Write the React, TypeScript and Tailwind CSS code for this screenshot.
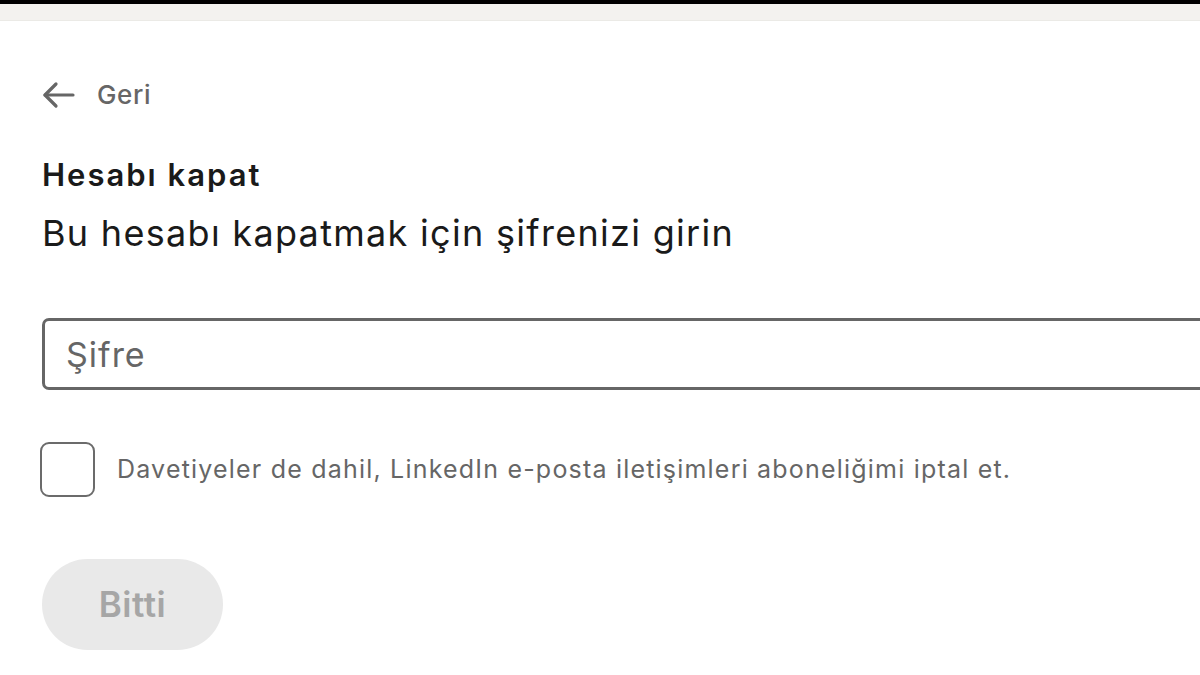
import React from "react";

export default function App() {
  return (
    <div className="w-[1200px] h-[675px] overflow-hidden bg-white relative" style={{ fontFamily: "Inter, 'Liberation Sans', sans-serif" }}>
      <div className="h-[4px] bg-black" />
      <div className="h-[17px] bg-[#f3f2ef] border-b border-[#ebeae6]" />
      <div className="pl-[42px] pt-[59px]">
        <div className="flex items-center gap-[22px] text-[#666666] h-[30px]">
          <svg width="33" height="28" viewBox="0 0 33 28" fill="none" stroke="#666666" strokeWidth="3.2" strokeLinecap="round" strokeLinejoin="round">
            <path d="M31 14H3" />
            <path d="M14 3L3 14l11 11" />
          </svg>
          <span className="text-[26px] leading-[30px] font-medium tracking-[0.6px]">Geri</span>
        </div>
        <h1 className="mt-[47px] text-[31px] leading-[36px] font-semibold text-[#1a1a1a] tracking-[2px]">Hesabı kapat</h1>
        <p className="mt-[18px] text-[36px] leading-[44px] text-[#1a1a1a] tracking-[1.3px]">Bu hesabı kapatmak için şifrenizi girin</p>
        <div className="mt-[63px] w-[1200px] h-[72px] border-[3px] border-[#666666] rounded-[7px] flex items-center pl-[21px]">
          <span className="text-[34px] text-[#666666] tracking-[1px]">Şifre</span>
        </div>
        <div className="mt-[52px] flex items-center gap-[22px] -ml-[2px]">
          <div className="w-[55px] h-[55px] border-[2px] border-[#6b6b6b] rounded-[9px] shrink-0" />
          <span className="text-[25px] text-[#666666] tracking-[1.2px]">Davetiyeler de dahil, LinkedIn e-posta iletişimleri aboneliğimi iptal et.</span>
        </div>
        <button className="mt-[62px] w-[181px] h-[91px] rounded-full bg-[#e9e9e9] text-[#a6a6a6] text-[35px] font-semibold tracking-[0.5px] flex items-center justify-center">
          Bitti
        </button>
      </div>
    </div>
  );
}
